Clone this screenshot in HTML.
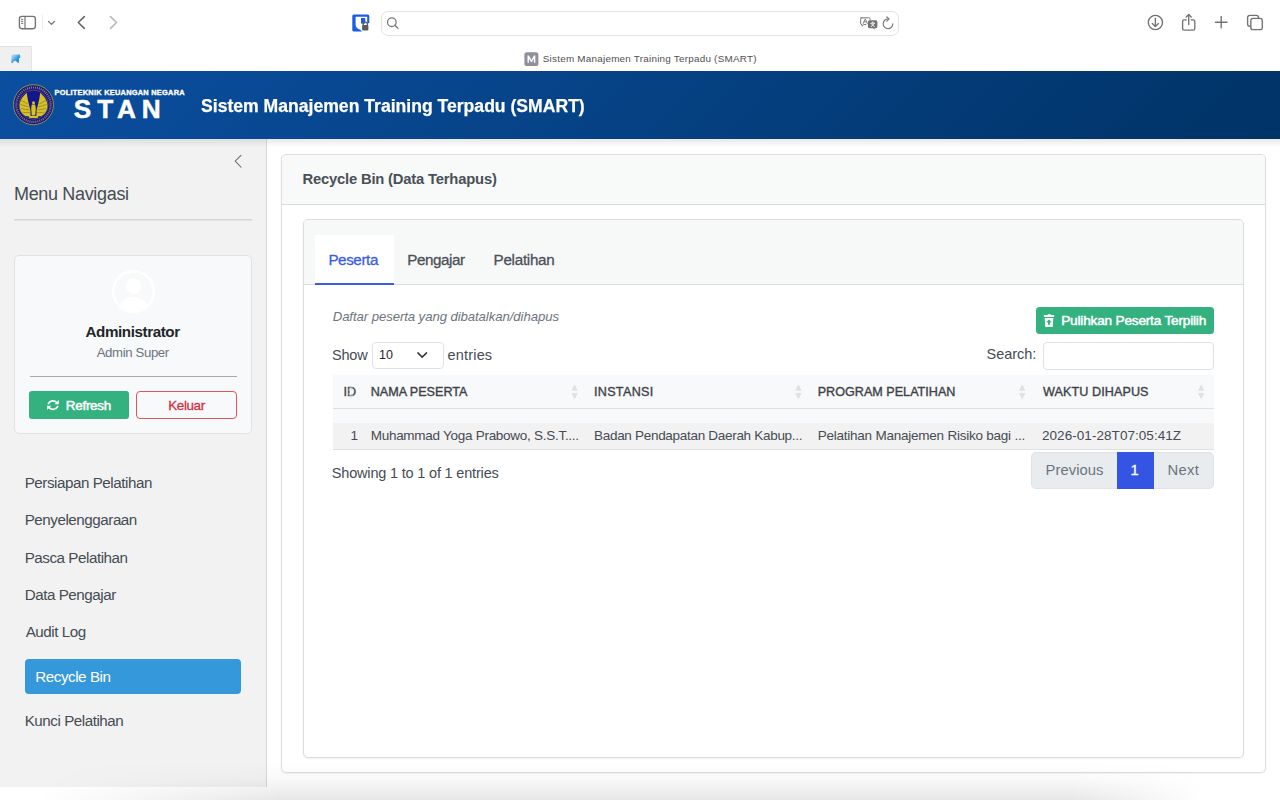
<!DOCTYPE html>
<html><head><meta charset="utf-8">
<title>Sistem Manajemen Training Terpadu (SMART)</title>
<style>
*{box-sizing:border-box;margin:0;padding:0}
html,body{width:1280px;height:800px;overflow:hidden;background:#fff;font-family:"Liberation Sans",sans-serif;color:#212529}
.a{position:absolute}
.t{position:absolute;white-space:nowrap;line-height:1;z-index:10}
svg{position:absolute;overflow:visible}
</style></head>
<body>
<!-- browser toolbar -->
<div class="a" style="left:0;top:0;width:1280px;height:71px;background:#fff"></div>
<!-- pinned tab -->
<div class="a" style="left:0;top:46px;width:32px;height:25px;background:#f0f0f0;border-right:1px solid #e4e4e4;border-top:1px solid #e2e2e2"></div>
<!-- address bar -->
<div class="a" style="left:381px;top:10.5px;width:518px;height:25px;border:1px solid #e2e2e2;border-radius:7px;background:#fff"></div>
<div class="a" style="left:42px;top:15px;width:1px;height:15px;background:#ececec"></div>

<svg class="a" style="left:0;top:0;z-index:6" width="1280" height="71" viewBox="0 0 1280 71">
<g fill="none" stroke="#737373" stroke-width="1.35" stroke-linecap="round" stroke-linejoin="round">
 <rect x="19.4" y="16.4" width="16" height="12.3" rx="2.6"/>
 <line x1="25" y1="16.6" x2="25" y2="28.6" stroke-width="1.2"/>
 <line x1="21.5" y1="19.4" x2="22.8" y2="19.4" stroke-width="1"/>
 <line x1="21.5" y1="21.4" x2="22.8" y2="21.4" stroke-width="1"/>
 <line x1="21.5" y1="23.4" x2="22.8" y2="23.4" stroke-width="1"/>
 <polyline points="48.6,21.5 51.5,24.4 54.4,21.5" stroke="#7a7a7a" stroke-width="1.3"/>
 <polyline points="84.3,16.6 78.3,22.5 84.3,28.4" stroke="#666" stroke-width="1.6"/>
 <polyline points="110.5,16.6 116.5,22.5 110.5,28.4" stroke="#b8b8b8" stroke-width="1.6"/>
 <circle cx="391.8" cy="22.2" r="4.3" stroke="#7a7a7a" stroke-width="1.3"/>
 <line x1="394.9" y1="25.3" x2="397.9" y2="28.3" stroke="#7a7a7a" stroke-width="1.4"/>
 <path d="M892.8,23.8 A4.8,4.8 0 1 1 888.2,19" stroke="#7a7a7a" stroke-width="1.2"/>
 <polyline points="886.8,17 889,19 886.8,21.2" stroke="#7a7a7a" stroke-width="1.2"/>
 <circle cx="1155.4" cy="22.5" r="7.1" stroke="#6f6f6f" stroke-width="1.3"/>
 <line x1="1155.4" y1="18.3" x2="1155.4" y2="26.4"/>
 <polyline points="1152.3,23.4 1155.4,26.5 1158.5,23.4"/>
 <path d="M1186.3,19.8 H1184.2 Q1182.6,19.8 1182.6,21.4 V28.5 Q1182.6,30.1 1184.2,30.1 H1193.2 Q1194.8,30.1 1194.8,28.5 V21.4 Q1194.8,19.8 1193.2,19.8 H1191.1"/>
 <line x1="1188.7" y1="14.6" x2="1188.7" y2="24.6"/>
 <polyline points="1186.2,17 1188.7,14.5 1191.2,17"/>
 <line x1="1215.4" y1="22.2" x2="1227" y2="22.2" stroke-width="1.4"/>
 <line x1="1221.2" y1="16.6" x2="1221.2" y2="27.8" stroke-width="1.4"/>
 <path d="M1250.6,26.2 H1249.9 Q1247.6,26.2 1247.6,23.9 V17.7 Q1247.6,15.4 1249.9,15.4 H1256.3 Q1258.6,15.4 1258.6,17.7 V18.3"/>
 <rect x="1250.8" y="18.3" width="11.5" height="11.4" rx="2.3"/>
 <path d="M860.8,17.8 H868.8 Q870.2,17.8 870.2,19.2 V20 M866,24.6 H863.6 L862.1,26.2 V24.6 H862 Q860.6,24.6 860.6,23.2 V19.2 Q860.6,17.8 862,17.8" stroke="#7a7a7a" stroke-width="1"/>
 <path d="M863.2,23.5 L865.3,18.8 L867.3,23.5 M864,21.9 H866.6" stroke="#7a7a7a" stroke-width="0.9"/>
</g>
<path d="M869.5,20.2 H875.8 Q877.4,20.2 877.4,21.8 V26.6 Q877.4,28.2 875.8,28.2 H874.6 V29.8 L873,28.2 H869.5 Q867.9,28.2 867.9,26.6 V21.8 Q867.9,20.2 869.5,20.2 Z" fill="#737373"/>
<path d="M870.4,23.2 H875 M872.7,21.6 V23.2 M871,23.4 L874.6,27 M874.4,23.4 L870.8,27" stroke="#fff" stroke-width="0.9" fill="none"/>
<!-- blue shield icon -->
<path d="M353.8,14.5 H367.8 Q369.3,14.5 369.3,16 V23.2 L367.2,23.2 V16.7 H355.6 V24.5 Q355.6,28.4 360.5,29.7 L362,31.5 H353.8 Q352.3,31.5 352.3,30 V16 Q352.3,14.5 353.8,14.5 Z" fill="#1b5ce6"/>
<rect x="361" y="18" width="4.2" height="5.6" fill="#1b5ce6"/>
<path d="M363.2,25.3 V24.2 A2.1,2.1 0 0 1 367.4,24.2 V25.3" fill="none" stroke="#5a5a5a" stroke-width="1.3"/>
<rect x="362.1" y="25.1" width="6.3" height="5.4" rx="0.9" fill="#5a5a5a"/>
<!-- pinned tab icon -->
<defs><linearGradient id="pg" x1="0" y1="0" x2="1" y2="1"><stop offset="0" stop-color="#d4e6f7"/><stop offset="0.55" stop-color="#2d9ee0"/><stop offset="1" stop-color="#0769c4"/></linearGradient></defs>
<path d="M12,54.6 H19.6 Q20.2,54.6 20.2,55.2 V57.6 Q20.2,58 19.6,58 H19 L18.8,62.6 Q18.6,63.4 18,62.8 L15.6,60.8 Q14.8,60.5 14.2,61 L12.2,63.2 Q11.3,63.6 11.3,62.6 L11.5,55.2 Q11.6,54.6 12,54.6 Z" fill="url(#pg)"/>
<!-- M favicon -->
<rect x="524.4" y="52.2" width="14" height="13.8" rx="2.6" fill="#8f909b"/>
<path d="M527.5,62.8 V55.5 H528.9 L531.4,60 L533.9,55.5 H535.3 V62.8 H533.9 V58.4 L531.9,62 H530.9 L528.9,58.4 V62.8 Z" fill="#fff"/>
</svg>
<!-- header -->
<div class="a" style="left:0;top:71px;width:1280px;height:68px;background:linear-gradient(135deg,#0b4fa1 0%,#003366 100%);z-index:5"></div>
<div class="a" style="left:0;top:139px;width:1280px;height:8px;background:linear-gradient(rgba(0,0,0,.09),rgba(0,0,0,0));z-index:4"></div>

<svg class="a" style="left:0;top:71px;z-index:6" width="200" height="68" viewBox="0 71 200 68">
<circle cx="33.5" cy="104.7" r="20" fill="#16168c" stroke="#b9a53a" stroke-width="0.8"/>
<circle cx="33.5" cy="104.7" r="17.2" fill="none" stroke="#c8b23a" stroke-width="2.2" stroke-dasharray="0.9 1.1" opacity="0.75"/>
<circle cx="33.5" cy="104.7" r="14.6" fill="none" stroke="#a89a3a" stroke-width="0.4"/>
<g fill="#d8c21e">
 <path d="M26.8,93 C23.5,95.5 20.2,99.5 19.6,104.5 C19.2,109.5 21.5,113.8 25.5,116 L30.6,116.4 L30.4,110 C29.2,105.5 27.6,100 26.8,93 Z"/>
 <path d="M40.2,93 C43.5,95.5 46.8,99.5 47.4,104.5 C47.8,109.5 45.5,113.8 41.5,116 L36.4,116.4 L36.6,110 C37.8,105.5 39.4,100 40.2,93 Z"/>
 <circle cx="33.5" cy="102.8" r="1.5"/>
 <path d="M31.8,104.6 H35.2 L35.8,108 L35.3,115.5 H31.7 L31.2,108 Z"/>
 <path d="M28.5,116 H38.5 L37.5,118 H29.5 Z"/>
</g>
<g stroke="#16168c" stroke-width="0.45" fill="none" opacity="0.7">
 <path d="M21.5,100.5 L27.8,104 M20.6,104.5 L28.6,107 M21,108.5 L29.4,110 M22.6,112.3 L30,112.8"/>
 <path d="M45.5,100.5 L39.2,104 M46.4,104.5 L38.4,107 M46,108.5 L37.6,110 M44.4,112.3 L37,112.8"/>
</g>
</svg>
<!-- sidebar -->
<div class="a" style="left:0;top:139px;width:267px;height:648px;background:#f2f2f2;border-right:1px solid #d8d8d8"></div>
<div class="a" style="left:14px;top:219px;width:238px;height:1px;background:#d3d5d7;box-shadow:0 1px 0 #e4e4e4"></div>
<div class="a" style="left:14px;top:255px;width:238px;height:179px;background:#f8f9fa;border:1px solid #e0e2e4;border-radius:5px"></div>
<div class="a" style="left:29.5px;top:376px;width:207px;height:1px;background:#a9abad"></div>
<div class="a" style="left:29px;top:391px;width:100px;height:27.5px;background:#33b17f;border-radius:3px"></div>
<div class="a" style="left:136px;top:391px;width:101px;height:27.5px;border:1px solid #e05560;border-radius:4px"></div>
<div class="a" style="left:25px;top:659px;width:216px;height:35px;background:#3498db;border-radius:4px"></div>

<!-- content cards -->
<div class="a" style="left:281px;top:154px;width:985px;height:619px;border:1px solid #dedede;border-radius:5px;background:#fff;box-shadow:0 1px 2px rgba(0,0,0,.06)"></div>
<div class="a" style="left:282px;top:155px;width:983px;height:50px;background:#f8f9f9;border-bottom:1px solid #dcdcdc;border-radius:4px 4px 0 0"></div>
<div class="a" style="left:303px;top:219px;width:941px;height:539px;border:1px solid #dcdcdc;border-radius:5px;background:#fff;box-shadow:0 1px 2px rgba(0,0,0,.06)"></div>
<div class="a" style="left:304px;top:220px;width:939px;height:65px;background:#f7f8f8;border-bottom:1px solid #dcdcdc;border-radius:4px 4px 0 0"></div>
<div class="a" style="left:314.5px;top:234.5px;width:79.5px;height:50.5px;background:#fff;border-bottom:2px solid #3b5ee0"></div>

<!-- restore button -->
<div class="a" style="left:1035.5px;top:307px;width:178.5px;height:27px;background:#33b17f;border-radius:3.5px"></div>
<!-- select & search -->
<div class="a" style="left:372px;top:341.5px;width:71.5px;height:27px;border:1px solid #dfe2e5;border-radius:4px;background:#fff"></div>
<div class="a" style="left:1042.5px;top:341.5px;width:171.5px;height:28px;border:1px solid #dfe2e5;border-radius:4px;background:#fff"></div>
<!-- table -->
<div class="a" style="left:332.5px;top:374.5px;width:881.5px;height:34.5px;background:#f8f9fa;border-bottom:1px solid #dee2e6"></div>
<div class="a" style="left:332.5px;top:409px;width:881.5px;height:14px;background:#f8f9fa"></div>
<div class="a" style="left:332.5px;top:423px;width:881.5px;height:27px;background:#f2f2f2;border-bottom:1px solid #dee2e6"></div>
<!-- pagination -->
<div class="a" style="left:1031px;top:452px;width:183px;height:37px;background:#e9ecef;border:1px solid #e0e3e6;border-radius:5px"></div>
<div class="a" style="left:1117px;top:452px;width:37px;height:37px;background:#3454e3"></div>

<!-- bottom -->
<div class="a" style="left:0;top:787px;width:1280px;height:13px;background:#fff"></div>
<div class="a" style="left:40px;top:762px;width:1200px;height:38px;z-index:20;background:linear-gradient(rgba(0,0,0,0) 0%,rgba(0,0,0,.025) 45%,rgba(0,0,0,.095) 100%);-webkit-mask-image:linear-gradient(to right,transparent 0%,#000 20%,#000 86%,transparent 97%)"></div>

<!-- content icons -->
<svg class="a" style="left:0;top:0;z-index:11" width="1280" height="800" viewBox="0 0 1280 800">
 <polyline points="241,155.3 235.2,161.2 241,167.1" fill="none" stroke="#6c757d" stroke-width="1.1" stroke-linecap="round" stroke-linejoin="round"/>
 <!-- avatar -->
 <g opacity="1">
  <clipPath id="avc"><circle cx="133.5" cy="291.6" r="19.6"/></clipPath>
  <circle cx="133.5" cy="291.6" r="20.3" fill="none" stroke="#ffffff" stroke-width="2.6"/>
  <circle cx="133.5" cy="286.2" r="7.7" fill="#ffffff"/>
  <ellipse cx="133.5" cy="309.5" rx="15" ry="12.5" fill="#ffffff" clip-path="url(#avc)"/>
 </g>
 <!-- sync -->
 <g fill="none" stroke="#fff" stroke-width="1.7" stroke-linecap="round">
  <path d="M48.4,403.6 A5.2,5.2 0 0 1 56.6,402.4"/>
  <path d="M57.6,406.6 A5.2,5.2 0 0 1 49.4,407.8"/>
 </g>
 <path d="M58.8,400.1 V404.3 H54.6 Z" fill="#fff"/>
 <path d="M47.1,410 V405.8 H51.3 Z" fill="#fff"/>
 <!-- trash restore -->
 <path d="M1047.5,315 L1048,314.2 H1050.6 L1051.1,315 H1054.2 V317.1 H1043.9 V315 Z" fill="#fff"/>
 <path d="M1044.7,318 H1053.3 L1052.8,326.2 Q1052.7,327.1 1051.8,327.1 H1046.2 Q1045.3,327.1 1045.2,326.2 Z" fill="#fff"/>
 <path d="M1049,319.6 L1051.8,322.2 H1050.1 V324.8 H1047.9 V322.2 H1046.2 Z" fill="#33b17f"/>
 <!-- select chevron -->
 <polyline points="417.9,352.9 422.2,357.1 426.5,352.9" fill="none" stroke="#343a40" stroke-width="1.5" stroke-linecap="round" stroke-linejoin="round"/>
 <!-- sort icons -->
 <g fill="#dfe1e4">
  <path d="M351,384.3 L354,390.8 H348 Z M348,393 H354 L351,399.4 Z" opacity="0.55"/>
  <path d="M574.6,384.3 L577.8,390.8 H571.4 Z M571.4,393 H577.8 L574.6,399.4 Z"/>
  <path d="M798.4,384.3 L801.6,390.8 H795.2 Z M795.2,393 H801.6 L798.4,399.4 Z"/>
  <path d="M1022.2,384.3 L1025.4,390.8 H1019 Z M1019,393 H1025.4 L1022.2,399.4 Z"/>
  <path d="M1201.2,384.3 L1204.4,390.8 H1198 Z M1198,393 H1204.4 L1201.2,399.4 Z"/>
 </g>
</svg>
<div class="t" style="left:542.80px;top:54.48px;font-size:9.9px;font-weight:normal;font-style:normal;letter-spacing:0.233px;color:#505050;">Sistem Manajemen Training Terpadu (SMART)</div>
<div class="t" style="left:200.60px;top:96.62px;font-size:18.8px;font-weight:bold;font-style:normal;color:#ffffff;transform:scaleX(0.9363);transform-origin:1px 0;-webkit-text-stroke:0.25px #fff">Sistem Manajemen Training Terpadu (SMART)</div>
<div class="t" style="left:54.50px;top:88.51px;font-size:7.4px;font-weight:bold;font-style:normal;letter-spacing:0.260px;color:#ffffff;-webkit-text-stroke:0.35px #fff">POLITEKNIK KEUANGAN NEGARA</div>
<div class="t" style="left:73.80px;top:96.33px;font-size:26.2px;font-weight:bold;font-style:normal;letter-spacing:5.867px;color:#ffffff;-webkit-text-stroke:0.5px #fff">STAN</div>
<div class="t" style="left:14.00px;top:184.70px;font-size:18px;font-weight:normal;font-style:normal;letter-spacing:-0.333px;color:#454c53;">Menu Navigasi</div>
<div class="t" style="left:85.50px;top:324.08px;font-size:15.2px;font-weight:bold;font-style:normal;letter-spacing:-0.417px;color:#212529;">Administrator</div>
<div class="t" style="left:96.70px;top:345.78px;font-size:13.2px;font-weight:normal;font-style:normal;letter-spacing:-0.370px;color:#6c757d;">Admin Super</div>
<div class="t" style="left:65.80px;top:398.51px;font-size:13.4px;font-weight:normal;font-style:normal;letter-spacing:-0.250px;color:#ffffff;-webkit-text-stroke:0.5px #fff">Refresh</div>
<div class="t" style="left:168.30px;top:398.51px;font-size:13.4px;font-weight:normal;font-style:normal;letter-spacing:-0.380px;color:#d42f3d;-webkit-text-stroke:0.3px #d42f3d">Keluar</div>
<div class="t" style="left:24.70px;top:474.88px;font-size:15.2px;font-weight:normal;font-style:normal;letter-spacing:-0.461px;color:#454c53;">Persiapan Pelatihan</div>
<div class="t" style="left:24.70px;top:512.28px;font-size:15.2px;font-weight:normal;font-style:normal;letter-spacing:-0.461px;color:#454c53;">Penyelenggaraan</div>
<div class="t" style="left:24.70px;top:549.78px;font-size:15.2px;font-weight:normal;font-style:normal;letter-spacing:-0.461px;color:#454c53;">Pasca Pelatihan</div>
<div class="t" style="left:24.70px;top:586.88px;font-size:15.2px;font-weight:normal;font-style:normal;letter-spacing:-0.461px;color:#454c53;">Data Pengajar</div>
<div class="t" style="left:25.70px;top:623.98px;font-size:15.2px;font-weight:normal;font-style:normal;letter-spacing:-0.461px;color:#454c53;">Audit Log</div>
<div class="t" style="left:35.25px;top:669.38px;font-size:15.2px;font-weight:normal;font-style:normal;letter-spacing:-0.450px;color:#ffffff;">Recycle Bin</div>
<div class="t" style="left:24.70px;top:713.18px;font-size:15.2px;font-weight:normal;font-style:normal;letter-spacing:-0.461px;color:#454c53;">Kunci Pelatihan</div>
<div class="t" style="left:302.50px;top:172.42px;font-size:14.8px;font-weight:bold;font-style:normal;letter-spacing:-0.200px;color:#495057;">Recycle Bin (Data Terhapus)</div>
<div class="t" style="left:328.40px;top:252.08px;font-size:15.2px;font-weight:normal;font-style:normal;letter-spacing:-0.400px;color:#3b5ee0;-webkit-text-stroke:0.3px #3b5ee0">Peserta</div>
<div class="t" style="left:407.30px;top:252.08px;font-size:15.2px;font-weight:normal;font-style:normal;letter-spacing:-0.429px;color:#4a5157;-webkit-text-stroke:0.3px #4a5157">Pengajar</div>
<div class="t" style="left:493.60px;top:252.08px;font-size:15.2px;font-weight:normal;font-style:normal;letter-spacing:-0.275px;color:#4a5157;-webkit-text-stroke:0.3px #4a5157">Pelatihan</div>
<div class="t" style="left:332.70px;top:309.98px;font-size:13.2px;font-weight:normal;font-style:italic;letter-spacing:-0.086px;color:#6c757d;">Daftar peserta yang dibatalkan/dihapus</div>
<div class="t" style="left:332.00px;top:347.68px;font-size:14.5px;font-weight:normal;font-style:normal;letter-spacing:-0.200px;color:#454c53;">Show</div>
<div class="t" style="left:379.00px;top:349.38px;font-size:12.5px;font-weight:normal;font-style:normal;letter-spacing:0.000px;color:#212529;">10</div>
<div class="t" style="left:447.60px;top:347.68px;font-size:14.5px;font-weight:normal;font-style:normal;letter-spacing:0.167px;color:#454c53;">entries</div>
<div class="t" style="left:986.60px;top:347.28px;font-size:14.5px;font-weight:normal;font-style:normal;letter-spacing:-0.033px;color:#454c53;">Search:</div>
<div class="t" style="left:1061.20px;top:313.84px;font-size:13.6px;font-weight:normal;font-style:normal;letter-spacing:-0.179px;color:#ffffff;-webkit-text-stroke:0.5px #fff">Pulihkan Peserta Terpilih</div>
<div class="t" style="left:343.60px;top:385.69px;font-size:12.6px;font-weight:normal;font-style:normal;letter-spacing:0.000px;color:#3c4248;-webkit-text-stroke:0.35px #3c4248">ID</div>
<div class="t" style="left:370.70px;top:385.69px;font-size:12.6px;font-weight:normal;font-style:normal;letter-spacing:-0.009px;color:#3c4248;-webkit-text-stroke:0.35px #3c4248">NAMA PESERTA</div>
<div class="t" style="left:593.90px;top:385.69px;font-size:12.6px;font-weight:normal;font-style:normal;letter-spacing:0.329px;color:#3c4248;-webkit-text-stroke:0.35px #3c4248">INSTANSI</div>
<div class="t" style="left:817.70px;top:385.69px;font-size:12.6px;font-weight:normal;font-style:normal;letter-spacing:0.006px;color:#3c4248;-webkit-text-stroke:0.35px #3c4248">PROGRAM PELATIHAN</div>
<div class="t" style="left:1043.00px;top:385.69px;font-size:12.6px;font-weight:normal;font-style:normal;letter-spacing:0.083px;color:#3c4248;-webkit-text-stroke:0.35px #3c4248">WAKTU DIHAPUS</div>
<div class="t" style="left:350.40px;top:429.42px;font-size:13.5px;font-weight:normal;font-style:normal;letter-spacing:0.000px;color:#454c53;">1</div>
<div class="t" style="left:370.70px;top:429.42px;font-size:13.5px;font-weight:normal;font-style:normal;letter-spacing:-0.274px;color:#454c53;">Muhammad Yoga Prabowo, S.S.T....</div>
<div class="t" style="left:594.00px;top:429.42px;font-size:13.5px;font-weight:normal;font-style:normal;letter-spacing:-0.297px;color:#454c53;">Badan Pendapatan Daerah Kabup...</div>
<div class="t" style="left:817.70px;top:429.42px;font-size:13.5px;font-weight:normal;font-style:normal;letter-spacing:-0.232px;color:#454c53;">Pelatihan Manajemen Risiko bagi ...</div>
<div class="t" style="left:1042.00px;top:429.42px;font-size:13.5px;font-weight:normal;font-style:normal;letter-spacing:0.053px;color:#454c53;">2026-01-28T07:05:41Z</div>
<div class="t" style="left:331.80px;top:466.07px;font-size:14.5px;font-weight:normal;font-style:normal;letter-spacing:-0.181px;color:#454c53;">Showing 1 to 1 of 1 entries</div>
<div class="t" style="left:1045.60px;top:463.02px;font-size:14.8px;font-weight:normal;font-style:normal;letter-spacing:0.043px;color:#6c757d;">Previous</div>
<div class="t" style="left:1130.50px;top:463.02px;font-size:14.8px;font-weight:normal;font-style:normal;letter-spacing:0.000px;color:#ffffff;-webkit-text-stroke:0.3px #fff">1</div>
<div class="t" style="left:1167.50px;top:463.02px;font-size:14.8px;font-weight:normal;font-style:normal;letter-spacing:0.333px;color:#6c757d;">Next</div>
</body></html>
